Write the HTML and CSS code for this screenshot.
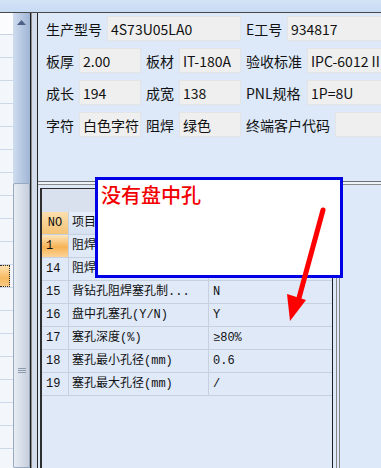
FILE: index.html
```html
<!DOCTYPE html>
<html>
<head>
<meta charset="utf-8">
<link rel="stylesheet" href="styles.css">
</head>
<body>
<div class="app">
  <div class="topbar"></div>
  <div class="main">
    <div class="left">
      <div class="list">
        <div class="list-head"></div>
        <div class="list-row"></div>
        <div class="list-row"></div>
        <div class="list-row"></div>
        <div class="list-row"></div>
        <div class="list-row"></div>
        <div class="list-row"></div>
        <div class="list-row"></div>
        <div class="list-row"></div>
        <div class="list-row"></div>
        <div class="list-row"></div>
        <div class="list-row"><div class="sel-item"></div></div>
        <div class="list-row"></div>
        <div class="list-row"></div>
        <div class="list-row"></div>
        <div class="list-row"></div>
        <div class="list-row"></div>
        <div class="list-row"></div>
        <div class="list-row"></div>
        <div class="list-row"></div>
      </div>
      <div class="scrollbar">
        <div class="sb-btn">
          <svg width="9" height="5" viewBox="0 0 9 5"><polygon points="0,5 9,5 4.5,0" fill="#4d6185"/></svg>
        </div>
        <div class="sb-track"></div>
        <div class="sb-thumb">
          <div class="grip"></div>
          <div class="grip"></div>
          <div class="grip"></div>
        </div>
      </div>
    </div>
    <div class="gap"></div>
    <div class="right">
      <div class="form">
        <div class="frow">
          <span class="lbl">生产型号</span><span class="inp w134">4S73U05LA0</span>
          <span class="lbl w36">E工号</span><span class="inp wide">934817</span>
        </div>
        <div class="frow">
          <span class="lbl">板厚</span><span class="inp w62">2.00</span>
          <span class="lbl">板材</span><span class="inp w62">IT-180A</span>
          <span class="lbl">验收标准</span><span class="inp wide">IPC-6012 II</span>
        </div>
        <div class="frow">
          <span class="lbl">成长</span><span class="inp w62">194</span>
          <span class="lbl">成宽</span><span class="inp w62">138</span>
          <span class="lbl w56">PNL规格</span><span class="inp wide">1P=8U</span>
        </div>
        <div class="frow">
          <span class="lbl">字符</span><span class="inp w62">白色字符</span>
          <span class="lbl">阻焊</span><span class="inp w62">绿色</span>
          <span class="lbl">终端客户代码</span><span class="inp wide"></span>
        </div>
      </div>
      <div class="divider"></div>
      <div class="lower">
        <div class="grid">
          <div class="grid-group"></div>
          <div class="grid-row head">
            <div class="cell no hd-no">NO</div>
            <div class="cell hd">项目</div>
            <div class="cell hd last">内容</div>
          </div>
          <div class="grid-row">
            <div class="cell no focus">1</div>
            <div class="cell">阻焊颜色</div>
            <div class="cell last">绿色</div>
          </div>
          <div class="grid-row">
            <div class="cell no">14</div>
            <div class="cell">阻焊塞孔(Y/N)</div>
            <div class="cell last">Y</div>
          </div>
          <div class="grid-row">
            <div class="cell no">15</div>
            <div class="cell">背钻孔阻焊塞孔制...</div>
            <div class="cell last">N</div>
          </div>
          <div class="grid-row">
            <div class="cell no">16</div>
            <div class="cell">盘中孔塞孔(Y/N)</div>
            <div class="cell last">Y</div>
          </div>
          <div class="grid-row">
            <div class="cell no">17</div>
            <div class="cell">塞孔深度(%)</div>
            <div class="cell last">≥80%</div>
          </div>
          <div class="grid-row">
            <div class="cell no">18</div>
            <div class="cell">塞孔最小孔径(mm)</div>
            <div class="cell last">0.6</div>
          </div>
          <div class="grid-row">
            <div class="cell no">19</div>
            <div class="cell">塞孔最大孔径(mm)</div>
            <div class="cell last">/</div>
          </div>
        </div>
        <div class="splitter"></div>
      </div>
    </div>
  </div>
  <div class="note">没有盘中孔</div>
  <svg class="arrow" width="381" height="468" viewBox="0 0 381 468">
    <line x1="323" y1="210" x2="299" y2="298" stroke="#ff0000" stroke-width="5" stroke-linecap="round"/>
    <polygon points="287,294 306,300 290,321" fill="#ff0000"/>
  </svg>
</div>
</body>
</html>
```

FILE: styles.css
```css
html, body {
  margin: 0;
  padding: 0;
}
body {
  width: 381px;
  height: 468px;
  overflow: hidden;
  background: #dde9f8;
  font-family: "Noto Sans CJK SC", "Noto Sans", sans-serif;
}
.app {
  position: relative;
  width: 381px;
  height: 468px;
  display: flex;
  flex-direction: column;
  overflow: hidden;
}
.topbar {
  height: 12px;
  flex: none;
  background: linear-gradient(#d4e4f7, #c7dbf3);
}
.main {
  flex: 1;
  min-height: 0;
  display: flex;
  border-top: 1px solid #4a4a4a;
}
.left {
  width: 31px;
  flex: none;
  display: flex;
  border-right: 1px solid #1e1e1e;
  box-sizing: border-box;
}
.list {
  width: 13px;
  flex: none;
  background: #f3f7fc;
}
.list-head {
  height: 21px;
  background: #fbfcfe;
  border-bottom: 1px solid #c9d5e6;
}
.list-row {
  height: 22px;
  border-bottom: 1px solid #cdd8e8;
}
.sel-item {
  width: 10px;
  height: 22px;
  box-sizing: border-box;
  background: linear-gradient(#fde2b2, #f6b85f 60%, #f9c983);
  border: 1px dotted #2a2a2a;
  border-left: none;
}
.scrollbar {
  width: 17px;
  flex: none;
  display: flex;
  flex-direction: column;
  background: linear-gradient(to right, #cfdcee, #9fb5d6);
}
.sb-btn {
  height: 19px;
  flex: none;
  display: flex;
  align-items: center;
  justify-content: center;
}
.sb-track {
  height: 151px;
  flex: none;
}
.sb-thumb {
  flex: 1;
  box-sizing: border-box;
  padding-top: 184px;
  padding-left: 4px;
  background: linear-gradient(to right, #e8edf3, #c6cfdc);
  border: 1px solid #98a8be;
  border-radius: 2px;
}
.grip {
  width: 8px;
  height: 1px;
  margin-bottom: 1px;
  background: #8d9bb0;
}
.gap {
  width: 6px;
  flex: none;
  box-sizing: border-box;
  background: #d2dceb;
  border-left: 1px solid #8c8c8c;
}
.right {
  flex: 1;
  min-width: 0;
  display: flex;
  flex-direction: column;
  border-left: 1px solid #262626;
  overflow: hidden;
}
.form {
  height: 168px;
  flex: none;
  box-sizing: border-box;
  padding: 3px 0 0 8px;
  display: flex;
  flex-direction: column;
  gap: 7px;
}
.frow {
  height: 25px;
  display: flex;
  align-items: center;
  gap: 5px;
  white-space: nowrap;
  font-size: 14px;
  color: #111;
}
.lbl {
  flex: none;
  line-height: 25px;
  padding-top: 2px;
}
.w36 { width: 36px; }
.w56 { width: 56px; }
.inp {
  flex: none;
  height: 25px;
  box-sizing: border-box;
  padding: 1px 0 0 3px;
  line-height: 23px;
  background: #efefef;
  border: 1px solid #e3e4e6;
  overflow: hidden;
}
.w134 { width: 134px; }
.w62 { width: 62px; }
.wide { width: 120px; }
.divider {
  height: 4px;
  flex: none;
  box-sizing: border-box;
  border-top: 1px solid #6e6e6e;
  border-bottom: 1px solid #8a8a8a;
  background: #eef3fa;
}
.lower {
  flex: 1;
  min-height: 0;
  display: flex;
  align-items: stretch;
  padding: 3px 0 0 2px;
}
.grid {
  width: 293px;
  flex: none;
  box-sizing: border-box;
  border-left: 2px solid #2e2e2e;
  border-top: 1px solid #2e2e2e;
  border-right: 1px solid #1e1e1e;
  background: #dfe9f8;
  font-family: "Liberation Mono", "Noto Sans CJK SC", monospace;
  font-size: 12px;
  color: #111;
}
.grid-group {
  height: 23px;
  background: #d9e1ee;
}
.grid-row {
  display: grid;
  grid-template-columns: 27px 140px 1fr;
  height: 23px;
}
.cell {
  box-sizing: border-box;
  height: 23px;
  line-height: 22px;
  padding-left: 3px;
  border-right: 1px solid #c6d0de;
  border-bottom: 1px solid #c6d0de;
  white-space: nowrap;
  overflow: hidden;
}
.cell.no {
  padding-left: 4px;
}
.cell.last {
  border-right: none;
  padding-left: 4px;
}
.hd {
  background: linear-gradient(#e6eef9, #d5e1f1);
}
.hd-no {
  background: linear-gradient(#fbdfae, #f4c375);
  text-align: center;
  padding-left: 0 !important;
}
.focus {
  background: linear-gradient(#fde6bd, #f7b354 55%, #fbd397);
}
.splitter {
  width: 4px;
  flex: none;
  margin-left: 3px;
  box-sizing: border-box;
  border-left: 1px solid #858585;
  border-right: 1px solid #858585;
}
.note {
  position: absolute;
  left: 95px;
  top: 177px;
  width: 248px;
  height: 101px;
  box-sizing: border-box;
  border: 3px solid #0000e6;
  background: #ffffff;
  color: #f20000;
  font-family: "Noto Sans CJK SC", sans-serif;
  font-size: 20px;
  font-weight: 500;
  line-height: 20px;
  padding: 5px 0 0 3px;
  white-space: nowrap;
}
.arrow {
  position: absolute;
  left: 0;
  top: 0;
  pointer-events: none;
}
```
